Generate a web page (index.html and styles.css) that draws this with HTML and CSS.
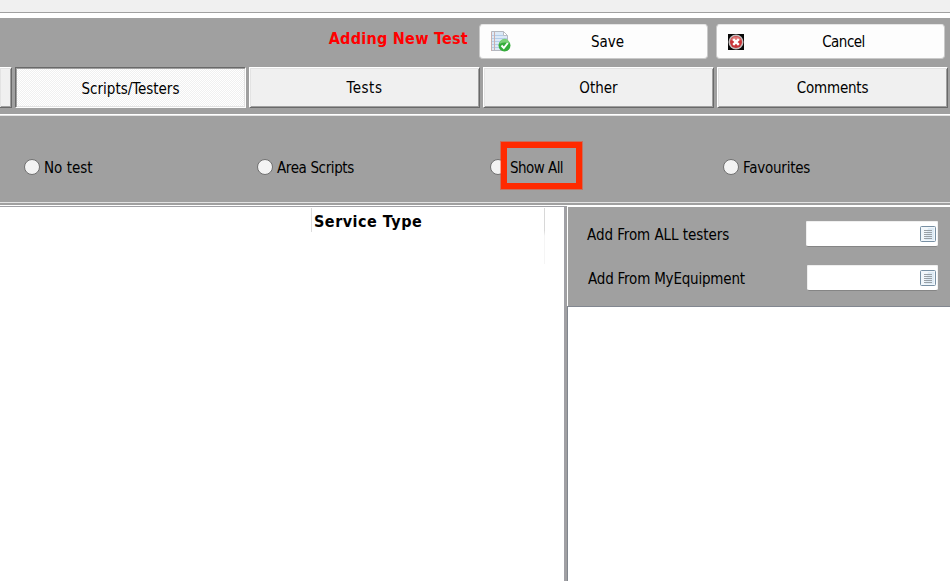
FILE: index.html
```html
<!DOCTYPE html>
<html lang="en">
<head>
<meta charset="utf-8">
<title>Adding New Test</title>
<link rel="stylesheet" href="styles.css">
</head>
<body>
<div class="window-strip"></div>
<header class="actions">
  <h1 class="title"><span>Adding New Test</span></h1>
  <button class="action"><svg class="action-icon save-icon" width="20" height="21" viewBox="0 0 20 21"><path d="M.5.5h12l4 4v15H.5z" fill="#dce9f7" stroke="#b4b8c0"/><path d="M1 4.5h14M1 7.5h15M1 10.5h15M1 13.5h15M1 16.5h15" stroke="#b3cdea"/><path d="M.5 20V1m3 0v18" stroke="#c9b0b0"/><path d="M12.500.5v4h4z" fill="#fff" stroke="#b9bdc4"/><circle cx="13.500" cy="14.500" r="6" fill="#35ad3b"/><path d="M8.500 13a5 5 0 0 1 10-.5q-5-2-10 .5" fill="#7bd077"/><path d="m10.500 14.500 2.300 2.500 4-5" fill="none" stroke="#fff" stroke-width="2"/></svg><span>Save</span></button>
  <button class="action"><svg class="action-icon cancel-icon" width="16" height="16" viewBox="0 0 16 16"><path d="M0 0h16v16H0z" fill="#080808"/><circle cx="8" cy="8" r="7.500" fill="#c4bcbc"/><circle cx="8" cy="8" r="6" fill="#c93438"/><path d="M3 6a5.300 5.300 0 0 1 10 0q-5 2-10 0" fill="#df7776"/><path d="m5.200 5.200 5.600 5.600m0-5.600-5.600 5.600" stroke="#fff" stroke-width="2.400"/></svg><span class="cancel-text">Cancel</span></button>
</header>
<nav class="tabs">
  <button class="tab tab-cut"></button>
  <button class="tab tab-active"><span class="t-scripts">Scripts/Testers</span></button>
  <button class="tab"><span class="t-tests">Tests</span></button>
  <button class="tab"><span class="t-other">Other</span></button>
  <button class="tab"><span class="t-comments">Comments</span></button>
</nav>
<section class="filters">
  <label class="option"><i class="radio"></i><span class="o-none">No test</span></label>
  <label class="option"><i class="radio"></i><span class="o-area">Area Scripts</span></label>
  <label class="option"><i class="radio"></i><span class="o-all">Show All</span><b class="highlight"></b></label>
  <label class="option"><i class="radio"></i><span class="o-fav">Favourites</span></label>
</section>
<main class="panes">
  <section class="grid-pane">
    <div class="column"><span>Service Type</span></div>
  </section>
  <section class="tester-pane">
    <div class="fields">
      <div class="field"><span class="f-all">Add From ALL testers</span><div class="input"><svg width="16" height="16" viewBox="0 0 16 16"><rect x=".5" y=".5" width="15" height="15" rx="1" fill="#f2f7fb" stroke="#7890a4"/><path d="M8 2h6v12H5z" fill="#deebf5"/><path d="M4 4.500h8M4 6.500h8M4 8.500h8M4 10.500h8M4 12.500h8" stroke="#99a0a6"/></svg></div></div>
      <div class="field second"><span class="f-my">Add From MyEquipment</span><div class="input"><svg width="16" height="16" viewBox="0 0 16 16"><rect x=".5" y=".5" width="15" height="15" rx="1" fill="#f2f7fb" stroke="#7890a4"/><path d="M8 2h6v12H5z" fill="#deebf5"/><path d="M4 4.500h8M4 6.500h8M4 8.500h8M4 10.500h8M4 12.500h8" stroke="#99a0a6"/></svg></div></div>
    </div>
    <div class="tester-list"></div>
  </section>
</main>
</body>
</html>
```
FILE: styles.css
```css
* { box-sizing: border-box; }
body {
  margin: 0;
  width: 950px;
  height: 581px;
  overflow: hidden;
  display: flex;
  flex-direction: column;
  background: #a0a0a0;
  color: #000;
  font: 15px/20px "DejaVu Sans Condensed", "Noto Sans", sans-serif;
}
button { font: inherit; color: inherit; padding: 0; margin: 0; }
span { white-space: nowrap; }
.window-strip { height: 18px; flex: none; background: #f0f0f0; border-bottom: 5px solid #fff; box-shadow: inset 0 -1px #a0a0a0; }
.actions { height: 49px; flex: none; display: flex; padding: 6px 5px 0 0; gap: 8px; }
.title { flex: 1; margin: 5px 3px 0 0; text-align: right; color: #f00; font: bold 16px/20px "DejaVu Sans", sans-serif; font-stretch: condensed; letter-spacing: .27px; }
.action { width: 229px; height: 35px; display: grid; grid-template-columns: 29px 1fr; align-items: center; padding: 0 0 0 11px; border: 1px solid #c9c9c9; border-top-color: #e5e5e5; border-radius: 4px; background: #fdfdfd; }
.action span { padding-right: 12px; }
.action .cancel-text { letter-spacing: -.5px; padding-right: 14px; }
.tabs { height: 47px; flex: none; display: flex; gap: 3px; }
.tab { width: 231px; height: 41px; flex: none; background: #f0f0f0; border: 1px solid; border-color: #fff #696969 #696969 #fff; box-shadow: inset 1px 1px #e3e3e3, inset -1px -1px #a0a0a0; }
.tab-cut { width: 12px; border-left: 0; }
.tab-active { background: conic-gradient(#f0f0f0 25%, #fff 0 50%, #f0f0f0 0 75%, #fff 0) 0 0 / 2px 2px; border-color: #696969 #fff #fff #696969; box-shadow: inset 1px 1px #a0a0a0, inset -1px -1px #e3e3e3; }
.tab-active span { position: relative; top: 1px; left: 0; }
.t-tests { letter-spacing: .5px; }
.t-comments { letter-spacing: -.2px; }
.filters { height: 91px; flex: none; display: grid; grid-template-columns: repeat(4, 233px); align-items: center; padding: 15px 0 0 24px; border-top: 1px solid #fff; border-bottom: 2px solid #a0a0a0; box-shadow: inset 0 1px #e3e3e3, inset 0 -1px #e3e3e3; }
.option { position: relative; display: flex; align-items: center; gap: 4px; }
.option span { padding-top: 2px; margin-bottom: -1px; }
.o-area { letter-spacing: -.38px; }
.o-all { letter-spacing: -.55px; }
.o-fav { letter-spacing: -.22px; }
.f-all { letter-spacing: -.06px; }
.f-my { letter-spacing: -.2px; }
.radio { width: 16px; height: 16px; border: 1px solid #707070; border-radius: 50%; background: #f3f3f3; }
.highlight { position: absolute; left: 11px; top: -14px; width: 81px; height: 47px; border: 6px solid #ff2a00; outline: 1px solid #ff2a0066; }
.panes { flex: 1; display: flex; border-top: 1px solid #fff; }
.grid-pane { width: 566px; border-top: 1px solid #a0a0a5; border-right: 2px solid #a0a0a5; background: #fff; }
.column { width: 234px; height: 56px; margin: 1px 0 0 311px; padding: 4px 0 0 3px; background: linear-gradient(#dcdcdc, #dcdcdc) 0 0 / 1px 24px no-repeat, linear-gradient(#d8d8d8 40%, #f5f5f5 50%) 100% 0 / 1px 56px no-repeat; font: bold 16px/20px "DejaVu Sans", sans-serif; font-stretch: condensed; letter-spacing: .5px; }
.tester-pane { flex: 1; display: flex; flex-direction: column; border-left: 1px solid #fff; margin-left: 1px; border-top: 1px solid #fff; }
.fields { height: 99px; padding: 14px 12px 0 19px; flex: none; }
.field { height: 44px; display: flex; align-items: flex-start; justify-content: space-between; }
.field span { padding-top: 4px; }
.second { padding-left: 1px; }
.input { width: 132px; height: 26px; padding: 5px 2px; display: flex; justify-content: flex-end; background: #fff; border-bottom: 1px solid #858585; border-radius: 2px; box-shadow: inset 0 1px #efefef, inset 1px 0 #efefef, inset -1px 0 #efefef; }
.input svg { display: block; }
.second .input { width: 131px; }
.tester-list { flex: 1; margin-left: -1px; border: solid #828790; border-width: 1px 0 0 1px; background: #fff; }
```
